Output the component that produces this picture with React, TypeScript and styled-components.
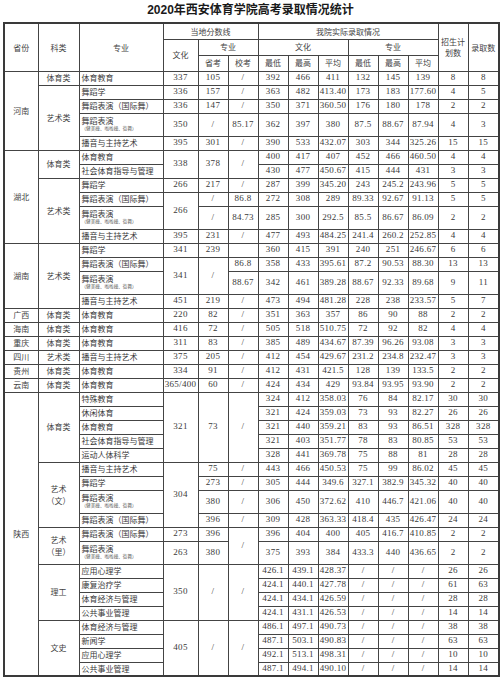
import React from "react";
import styled, { createGlobalStyle } from "styled-components";

type Cell = { t: string; r?: number };
type Row = { pre: Cell[]; major: string; sub?: boolean; mid: Cell[]; nums: string[] };

const c = (t: string | number, r = 1): Cell => ({ t: String(t), r });
const n = (s: string) => s.split(" ");
const SUB = "（健美操、啦啦操、街舞）";

const rows: Row[] = [
  { pre: [c("河南", 5), c("体育类")], major: "体育教育", mid: [c(337), c(105), c("/")], nums: n("392 466 411 132 145 139 8 8") },
  { pre: [c("艺术类", 4)], major: "舞蹈学", mid: [c(336), c(157), c("/")], nums: n("363 482 413.40 173 183 177.60 4 5") },
  { pre: [], major: "舞蹈表演（国际舞）", mid: [c(336), c(147), c("/")], nums: n("350 371 360.50 176 180 178 2 2") },
  { pre: [], major: "舞蹈表演", sub: true, mid: [c(350), c("/"), c("85.17")], nums: n("362 397 380 87.5 88.67 87.94 4 3") },
  { pre: [], major: "播音与主持艺术", mid: [c(395), c(301), c("/")], nums: n("390 533 432.07 303 344 325.26 15 15") },

  { pre: [c("湖北", 6), c("体育类", 2)], major: "体育教育", mid: [c(338, 2), c(378, 2), c("/", 2)], nums: n("400 417 407 452 466 460.50 4 4") },
  { pre: [], major: "社会体育指导与管理", mid: [], nums: n("430 477 450.67 415 444 431 3 3") },
  { pre: [c("艺术类", 4)], major: "舞蹈学", mid: [c(266), c(217), c("/")], nums: n("287 399 345.20 243 245.2 243.96 5 5") },
  { pre: [], major: "舞蹈表演（国际舞）", mid: [c(266, 2), c("/"), c("86.8")], nums: n("272 308 289 89.33 92.67 91.13 5 5") },
  { pre: [], major: "舞蹈表演", sub: true, mid: [c("/"), c("84.73")], nums: n("285 300 292.5 85.5 86.67 86.09 2 2") },
  { pre: [], major: "播音与主持艺术", mid: [c(395), c(231), c("/")], nums: n("477 493 484.25 241.4 260.2 252.85 4 4") },

  { pre: [c("湖南", 4), c("艺术类", 4)], major: "舞蹈学", mid: [c(341), c(239), c("")], nums: n("360 415 391 240 251 246.67 6 6") },
  { pre: [], major: "舞蹈表演（国际舞）", mid: [c(341, 2), c("/", 2), c("86.8")], nums: n("358 433 395.61 87.2 90.53 88.30 13 13") },
  { pre: [], major: "舞蹈表演", sub: true, mid: [c("88.67")], nums: n("342 461 389.28 88.67 92.33 89.68 9 11") },
  { pre: [], major: "播音与主持艺术", mid: [c(451), c(219), c("/")], nums: n("473 494 481.28 228 238 233.57 5 7") },

  { pre: [c("广西"), c("体育类")], major: "体育教育", mid: [c(220), c(82), c("/")], nums: n("351 363 357 86 90 88 2 2") },
  { pre: [c("海南"), c("体育类")], major: "体育教育", mid: [c(416), c(72), c("/")], nums: n("505 518 510.75 72 92 82 4 4") },
  { pre: [c("重庆"), c("体育类")], major: "体育教育", mid: [c(311), c(83), c("/")], nums: n("385 489 434.67 87.39 96.26 93.08 3 3") },
  { pre: [c("四川"), c("艺术类")], major: "播音与主持艺术", mid: [c(375), c(205), c("/")], nums: n("412 454 429.67 231.2 234.8 232.47 3 3") },
  { pre: [c("贵州"), c("体育类")], major: "体育教育", mid: [c(334), c(91), c("/")], nums: n("412 431 421.5 128 139 133.5 2 2") },
  { pre: [c("云南"), c("体育类")], major: "体育教育", mid: [c("365/400"), c(60), c("/")], nums: n("424 434 429 93.84 93.95 93.90 2 2") },

  { pre: [c("陕西", 19), c("体育类", 5)], major: "特殊教育", mid: [c(321, 5), c(73, 5), c("/", 5)], nums: n("324 412 358.03 76 84 82.17 30 30") },
  { pre: [], major: "休闲体育", mid: [], nums: n("321 424 359.03 73 93 82.27 26 26") },
  { pre: [], major: "体育教育", mid: [], nums: n("321 440 359.21 83 93 86.51 328 328") },
  { pre: [], major: "社会体育指导与管理", mid: [], nums: n("321 403 351.77 78 83 80.85 53 53") },
  { pre: [], major: "运动人体科学", mid: [], nums: n("328 441 369.78 75 88 81 28 28") },
  { pre: [c("艺术\n（文）", 4)], major: "播音与主持艺术", mid: [c(304, 4), c(75), c("/")], nums: n("443 466 450.53 75 99 86.02 45 45") },
  { pre: [], major: "舞蹈学", mid: [c(273), c("/")], nums: n("305 444 349.6 327.1 382.9 345.32 40 40") },
  { pre: [], major: "舞蹈表演", sub: true, mid: [c(380), c("/")], nums: n("306 450 372.62 410 446.7 421.06 40 40") },
  { pre: [], major: "舞蹈表演（国际舞）", mid: [c(396), c("/")], nums: n("309 428 363.33 418.4 435 426.47 24 24") },
  { pre: [c("艺术\n（里）", 2)], major: "舞蹈表演（国际舞）", mid: [c(273), c(396), c("/", 2)], nums: n("396 404 400 405 416.7 410.85 2 2") },
  { pre: [], major: "舞蹈表演", sub: true, mid: [c(263), c(380)], nums: n("375 393 384 433.3 440 436.65 2 2") },
  { pre: [c("理工", 4)], major: "应用心理学", mid: [c(350, 4), c("/", 4), c("/", 4)], nums: n("426.1 439.1 428.37 / / / 26 26") },
  { pre: [], major: "康复治疗学", mid: [], nums: n("424.1 440.1 427.78 / / / 61 63") },
  { pre: [], major: "体育经济与管理", mid: [], nums: n("424.1 434.1 426.59 / / / 28 28") },
  { pre: [], major: "公共事业管理", mid: [], nums: n("424.1 431.1 426.53 / / / 14 14") },
  { pre: [c("文史", 4)], major: "体育经济与管理", mid: [c(405, 4), c("/", 4), c("/", 4)], nums: n("486.1 497.1 490.73 / / / 38 38") },
  { pre: [], major: "新闻学", mid: [], nums: n("487.1 503.1 490.83 / / / 63 63") },
  { pre: [], major: "应用心理学", mid: [], nums: n("492.1 513.1 498.31 / / / 10 10") },
  { pre: [], major: "公共事业管理", mid: [], nums: n("487.1 494.1 490.10 / / / 14 14") },
];

const widths = [34, 41, 84, 35, 30, 30, 30, 30, 30, 30, 30, 30, 30, 31];

const App = () => {
  return (
    <Page>
      <GlobalStyle />
      <Title>2020年西安体育学院高考录取情况统计</Title>
      <Sheet>
        <colgroup>
          {widths.map((w, i) => (
            <col key={i} style={{ width: w }} />
          ))}
        </colgroup>
        <thead>
          <HeadRow>
            <Label rowSpan={3}>省份</Label>
            <Label rowSpan={3}>科类</Label>
            <Label rowSpan={3}>专业</Label>
            <Label colSpan={3}>当地分数线</Label>
            <Label colSpan={6}>我院实际录取情况</Label>
            <Label rowSpan={3}>{"招生计\n划数"}</Label>
            <Label rowSpan={3}>录取数</Label>
          </HeadRow>
          <HeadRow>
            <Label rowSpan={2}>文化</Label>
            <Label colSpan={2}>专业</Label>
            <Label colSpan={3}>文化</Label>
            <Label colSpan={3}>专业</Label>
          </HeadRow>
          <HeadRow>
            <Label>省考</Label>
            <Label>校考</Label>
            <Label>最低</Label>
            <Label>最高</Label>
            <Label>平均</Label>
            <Label>最低</Label>
            <Label>最高</Label>
            <Label>平均</Label>
          </HeadRow>
        </thead>
        <tbody>
          {rows.map((row, i) => (
            <BodyRow key={i} $tall={row.sub}>
              {row.pre.map((p, j) => (
                <Label key={"p" + j} rowSpan={p.r}>
                  {p.t}
                </Label>
              ))}
              <Major>
                {row.major}
                {row.sub && <Small>{SUB}</Small>}
              </Major>
              {row.mid.map((m, j) => (
                <Num key={"m" + j} rowSpan={m.r}>
                  {m.t}
                </Num>
              ))}
              {row.nums.map((v, j) => (
                <Num key={"n" + j}>{v}</Num>
              ))}
            </BodyRow>
          ))}
        </tbody>
      </Sheet>
    </Page>
  );
};

export default App;

const GlobalStyle = createGlobalStyle`
  body {
    margin: 0;
    background: #ffffff;
  }
`;
const Page = styled.div`
  width: 500px;
  padding: 0 2px 0 3px;
  box-sizing: border-box;
  color: #333;
`;
const Title = styled.div`
  height: 22px;
  line-height: 21px;
  text-align: center;
  font-family: "Liberation Sans", "Noto Sans CJK SC", sans-serif;
  font-size: 12px;
  font-weight: 700;
  color: #1a1a1a;
`;
const Sheet = styled.table`
  width: 495px;
  table-layout: fixed;
  border-collapse: collapse;
  border: 2px solid #3a3a3a;
`;
const HeadRow = styled.tr`
  height: 16px;
`;
const BodyRow = styled.tr<{ $tall?: boolean }>`
  height: ${({ $tall }) => ($tall ? "23px" : "14px")};
`;
const Base = styled.td`
  border: 1px solid #444;
  padding: 0;
  text-align: center;
  vertical-align: middle;
  line-height: 1.05;
  overflow: hidden;
  white-space: nowrap;
`;
const Label = styled(Base)`
  font-family: "Noto Sans CJK SC", sans-serif;
  font-size: 8px;
  line-height: 1.4;
  color: #444;
  white-space: pre-line;
`;
const Num = styled(Base)`
  font-family: "Liberation Serif", "Noto Sans CJK SC", serif;
  font-size: 9px;
  letter-spacing: 0.3px;
  color: #3a3a3a;
`;
const Major = styled(Base)`
  text-align: left;
  padding-left: 2px;
  font-family: "Noto Sans CJK SC", sans-serif;
  font-size: 8px;
  color: #3a3a3a;
`;
const Small = styled.div`
  font-size: 4.6px;
  line-height: 1.2;
  margin-top: 1px;
  color: #555;
`;
